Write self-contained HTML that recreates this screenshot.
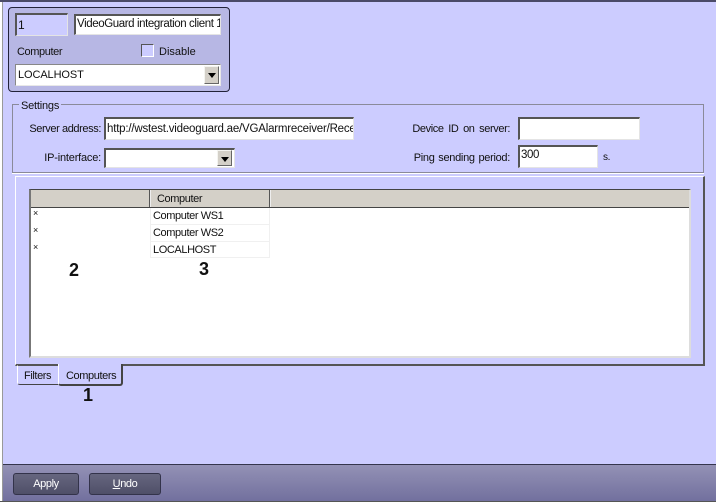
<!DOCTYPE html>
<html><head><meta charset="utf-8">
<style>
html,body{margin:0;padding:0}
body{width:716px;height:502px;position:relative;overflow:hidden;background:#ccccff;font:11px "Liberation Sans",sans-serif;letter-spacing:-.4px;color:#111}
div,span{position:absolute;box-sizing:border-box;white-space:nowrap}
.in{background:#fff;border:1px solid #e4e4e4;border-top:2px solid #555;border-left:2px solid #555;line-height:16px;padding-left:1px;overflow:hidden}
.btn{background:#d4d0c8;border:1px solid;border-color:#f4f4f0 #666 #666 #f4f4f0}
.btn:after{content:"";position:absolute;left:3px;top:6px;border:4px solid transparent;border-top:5px solid #000;border-bottom:0}
.t{line-height:14px}
.r{text-align:right}
.h{background:#d4d0c8;height:18px;top:190px;border-right:1px solid #555}
.num{font:bold 18px "Liberation Sans",sans-serif;letter-spacing:0;color:#111;line-height:18px}
.row{left:30px;width:660px;height:17px;line-height:16px}
.cell{left:120px;width:120px;height:17px;border:1px solid #f0f0f0;border-width:0 1px 1px 1px;padding-left:2px}
.st{left:3px;top:-2px;width:10px;font-size:9px;line-height:14px}
.b{background:linear-gradient(#66667f,#4f4f68);border:1px solid #33334a;border-radius:3px;color:#fff;text-align:center;line-height:20px;height:22px;top:473px}
</style></head><body>
<div style="left:0;top:0;width:716px;height:2px;background:#4a4a68"></div>
<div style="left:0;top:2px;width:2px;height:500px;background:#fff"></div>
<div style="left:2px;top:2px;width:1px;height:500px;background:#999"></div>

<div style="left:8px;top:7px;width:222px;height:85px;background:#b7b7e4;border:1px solid #22223a;border-radius:4px"></div>
<div class="in" style="left:15px;top:13px;width:53px;height:23px;background:#ccccff;padding-top:2px;font-size:12px">1</div>
<div class="in" style="left:74px;top:14px;width:147px;height:21px;font-size:11.5px;letter-spacing:-.4px">VideoGuard integration client 1</div>
<div class="t" style="left:17px;top:45px">Computer</div>
<div style="left:141px;top:44px;width:13px;height:13px;background:#ccccff;border:1px solid;border-color:#555 #fff #fff #555"></div>
<div class="t" style="left:159px;top:45px;letter-spacing:0">Disable</div>
<div class="in" style="left:15px;top:64px;width:206px;height:22px;border-color:#888 #e8e8e8 #e8e8e8 #888;border-width:1px;line-height:21px;padding-left:2px;letter-spacing:-.1px">LOCALHOST</div>
<div class="btn" style="left:204px;top:66px;width:15px;height:18px"></div>

<div style="left:12px;top:104px;width:692px;height:69px;border:1px solid #8a8a9a;box-shadow:0 1px 0 #fff"></div>
<div class="t" style="left:19px;top:99px;background:#ccccff;padding:0 2px;letter-spacing:-.2px">Settings</div>
<div class="t r" style="left:0;width:101px;top:122px">Server address:</div>
<div class="in" style="left:104px;top:117px;width:250px;height:23px;font-size:11.5px;letter-spacing:-.2px;padding-top:2px">http://wstest.videoguard.ae/VGAlarmreceiver/Receiver</div>
<div class="t r" style="left:0;width:101px;top:151px;letter-spacing:-.2px">IP-interface:</div>
<div class="in" style="left:104px;top:148px;width:131px;height:20px"></div>
<div class="btn" style="left:217px;top:150px;width:15px;height:16px"></div>
<div class="t r" style="left:380px;width:130px;top:122px;word-spacing:2px">Device ID on server:</div>
<div class="in" style="left:518px;top:117px;width:122px;height:23px"></div>
<div class="t r" style="left:380px;width:130px;top:151px;letter-spacing:-.3px;word-spacing:1px">Ping sending period:</div>
<div class="in" style="left:518px;top:145px;width:80px;height:23px;font-size:11.5px">300</div>
<div class="t" style="left:603px;top:151px;font-size:10px">s.</div>

<div style="left:15px;top:176px;width:690px;height:190px;border:solid;border-width:1px 2px 2px 1px;border-color:#fff #555 #555 #fff"></div>
<div style="left:29px;top:189px;width:662px;height:169px;background:#fff;border:solid;border-color:#444 #ddd #ddd #777;border-width:1px 2px 2px 2px"></div>
<div class="h" style="left:31px;width:119px"></div>
<div class="h" style="left:150px;width:120px;padding-left:6px;line-height:19px;border-left:1px solid #eee">Computer</div>
<div class="h" style="left:270px;width:419px;border-right:0;border-left:1px solid #eee"></div>
<div style="left:31px;top:207px;width:658px;height:1px;background:#444"></div>

<div class="row" style="top:208px"><span class="st">×</span><div class="cell" style="top:0">Computer WS1</div></div>
<div class="row" style="top:225px"><span class="st">×</span><div class="cell" style="top:0">Computer WS2</div></div>
<div class="row" style="top:241px"><span class="st" style="top:-1px">×</span><div class="cell" style="top:0;line-height:18px">LOCALHOST</div></div>
<div class="num" style="left:69px;top:261px">2</div>
<div class="num" style="left:199px;top:260px">3</div>

<div style="left:17px;top:365px;width:42px;height:20px;border:1px solid;border-color:transparent #ccccff #444 #fff;border-bottom-left-radius:3px;padding-left:6px;line-height:21px">Filters</div>
<div style="left:58px;top:364px;width:65px;height:22px;background:#ccccff;border-right:2px solid #444;border-bottom:2px solid #444;border-left:1px solid #fff;border-bottom-left-radius:3px;border-bottom-right-radius:3px;padding:2px 0 0 7px;line-height:20px">Computers</div>
<div class="num" style="left:83px;top:386px">1</div>

<div style="left:3px;top:464px;width:713px;height:37px;background:linear-gradient(#9391b5,#72709e);border-top:1px solid #35354d"></div>
<div style="left:0;top:501px;width:716px;height:1px;background:#555"></div>
<div class="b" style="left:13px;width:66px">Apply</div>
<div class="b" style="left:89px;width:72px"><u>U</u>ndo</div>
</body></html>
